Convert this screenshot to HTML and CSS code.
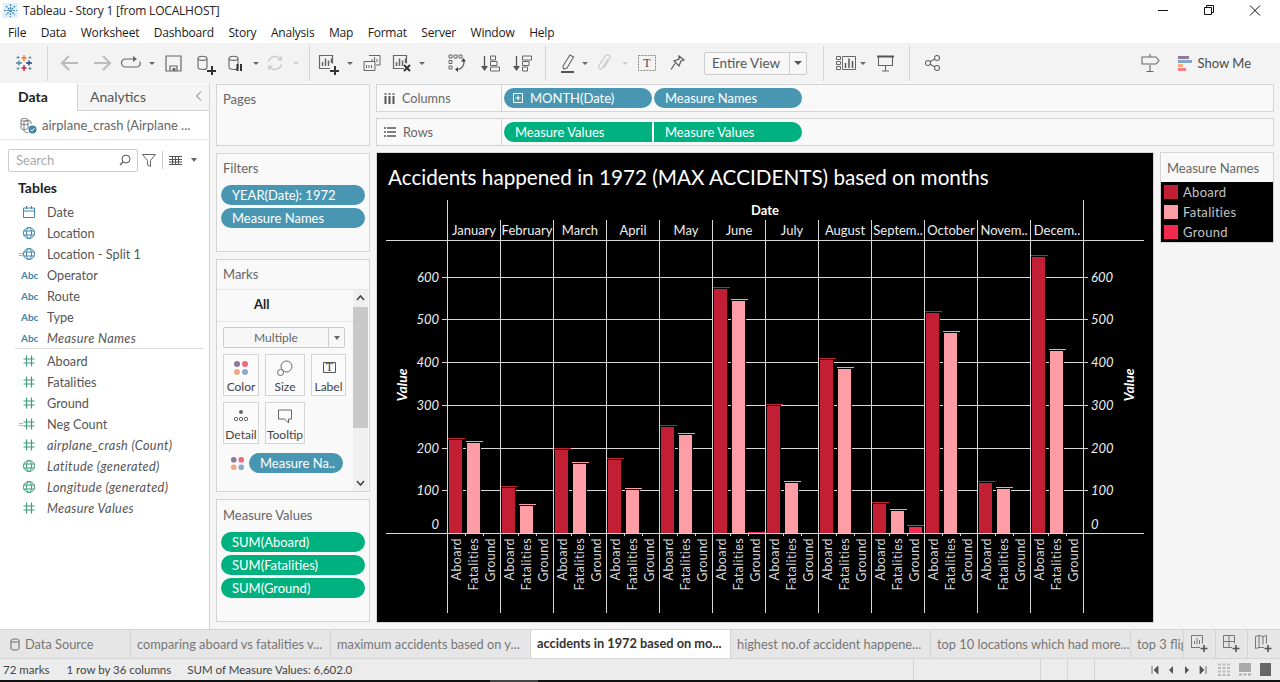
FILE: index.html
```html
<!DOCTYPE html>
<html lang="en">

<head>
    <meta charset="UTF-8">
    <meta name="viewport" content="width=device-width, initial-scale=1.0">
    <title>Tableau - Story 1 [from LOCALHOST]</title>
    <link rel="stylesheet" href="styles.css">
</head>

<body>
    <svg class="defs" width="0" height="0">
        <symbol id="i-date" viewBox="0 0 14 14"><path d="M1.5 3h11v9.5h-11zM1.5 6h11M4.500 1v3M9.500 1v3" fill="none" stroke="#3f86a8" /></symbol>
        <symbol id="i-globe" viewBox="0 0 14 14"><g fill="none" stroke="currentColor"><circle cx="7" cy="7" r="5.500" /><ellipse cx="7" cy="7" rx="2.500" ry="5.500" /><path d="M1.500 5h11M1.500 9h11" /></g></symbol>
        <symbol id="i-hash" viewBox="0 0 14 14"><path d="M4.500 1.500v11M9.500 1.500v11M1.500 5h11M1.500 9h11" fill="none" stroke="#3f9e7c" stroke-width="1.200" /></symbol>
        <symbol id="i-dots" viewBox="0 0 16 16"><circle cx="4" cy="4" r="3" fill="#8a7a9c" /><circle cx="12" cy="4" r="3" fill="#f0687a" /><circle cx="4" cy="12" r="3" fill="#f4a67f" /><circle cx="12" cy="12" r="3" fill="#8aa9cf" /></symbol>
        <symbol id="i-cyl" viewBox="0 0 18 18"><path d="M2 4.500c0-3 9-3 9 0v9c0 1.500-2 2-4 2s-5-.5-5-2zM2 4.500c0 2.500 9 2.500 9 0" fill="none" stroke="#666" stroke-width="1.100" /></symbol>
        <symbol id="i-sheet" viewBox="0 0 20 20"><path d="M12 15.500H1.500v-13h13v8" fill="none" stroke="#666" stroke-width="1.200" /><path d="M4.500 13V9M7.500 13V5.500M10.500 13V7.500M13.500 10V5.500" stroke="#666" stroke-width="1.500" /></symbol>
    </svg>

    <div class="app">
        <header class="title-bar">
            <svg class="app-icon" width="15" height="15" viewBox="0 0 15 15">
                <rect width="15" height="15" fill="#e3eff6" />
                <path d="M7.500 1v13M1 7.500h13M3 3l9 9M12 3l-9 9" stroke="#3d85b0" stroke-width="1.200" stroke-dasharray="2 1" />
            </svg>
            <span class="app-title">Tableau - Story 1 [from LOCALHOST]</span>
            <div class="win-buttons">
                <svg class="win-button" width="46" height="21" viewBox="0 0 46 21"><path d="M18 10.500h10" stroke="#111" /></svg>
                <svg class="win-button" width="46" height="21" viewBox="0 0 46 21"><path d="M18.500 7.500h7v7h-7zM20.500 7.500v-2h7v7h-2" fill="none" stroke="#111" /></svg>
                <svg class="win-button" width="46" height="21" viewBox="0 0 46 21"><path d="M18 5.500l10 10M28 5.500l-10 10" stroke="#111" /></svg>
            </div>
        </header>

        <nav class="menu-bar">
            <span>File</span><span>Data</span><span>Worksheet</span><span>Dashboard</span><span>Story</span><span>Analysis</span><span>Map</span><span>Format</span><span>Server</span><span>Window</span><span>Help</span>
        </nav>

        <div class="toolbar">
            <span class="tool w47">
                <svg width="18" height="18" viewBox="0 0 18 18">
                    <path d="M9 1v6M6.500 4h5" stroke="#e8762c" stroke-width="1.400" />
                    <path d="M9 11v6M6.500 14h5" stroke="#c72035" stroke-width="1.400" />
                    <path d="M1 9h6M4 6.500v5" stroke="#5b879b" stroke-width="1.400" />
                    <path d="M11 9h6M14 6.500v5" stroke="#1f457e" stroke-width="1.400" />
                    <path d="M3 2v3M1.500 3.500h3M15 13v3M13.500 14.500h3" stroke="#59879b" />
                    <path d="M15 2v3M13.500 3.500h3M3 13v3M1.500 14.500h3" stroke="#7099a6" />
                </svg>
            </span>
            <span class="tool-sep"></span>
            <span class="tool w6"></span>
            <span class="tool w32"><svg width="18" height="16" viewBox="0 0 18 16"><path d="M1 8h16M8 1L1 8l7 7" fill="none" stroke="#bbb" stroke-width="2" /></svg></span>
            <span class="tool w32"><svg width="18" height="16" viewBox="0 0 18 16"><path d="M17 8H1M10 1l7 7-7 7" fill="none" stroke="#bbb" stroke-width="2" /></svg></span>
            <span class="tool w26"><svg width="20" height="14" viewBox="0 0 20 14"><path d="M12 3H4.500a4 4 0 0 0 0 8h11a3.500 3.500 0 0 0 3-5.500" fill="none" stroke="#666" stroke-width="1.200" /><path d="M12 0l4 3-4 3z" fill="#666" /></svg></span>
            <span class="tool w16"><i class="caret"></i></span>
            <span class="tool w26"><svg width="17" height="17" viewBox="0 0 17 17"><path d="M1 1h15v15H1z" fill="none" stroke="#666" stroke-width="1.200" /><path d="M5 16v-5h7v5" fill="none" stroke="#666" stroke-width="1.200" /><path d="M7.500 13h3v3h-3z" fill="#666" /></svg></span>
            <span class="tool w38 cyl-tool"><svg width="18" height="18"><use href="#i-cyl" /></svg><b class="mini-plus"></b></span>
            <span class="tool w24">
                <svg width="18" height="18" viewBox="0 0 18 18"><use href="#i-cyl" width="18" height="18" /><path d="M10.500 10v7M14 10v7" stroke="#333" stroke-width="2" /></svg>
            </span>
            <span class="tool w16"><i class="caret"></i></span>
            <span class="tool w22"><svg width="18" height="18" viewBox="0 0 18 18"><path d="M2.500 7.500a7 7 0 0 1 12-2.500M15.500 10.500a7 7 0 0 1-12 2.500" fill="none" stroke="#ccc" stroke-width="1.600" /><path d="M16 1.500v5h-5zM2 16.500v-5h5z" fill="#ccc" /></svg></span>
            <span class="tool w20"><i class="caret caret-off"></i></span>
            <span class="tool w3"></span>
            <span class="tool-sep"></span>
            <span class="tool w36 cyl-tool"><svg width="20" height="20"><use href="#i-sheet" /></svg><b class="mini-plus"></b></span>
            <span class="tool w8"><i class="caret"></i></span>
            <span class="tool w36">
                <svg width="18" height="18" viewBox="0 0 18 18"><path d="M6 1.500h11V11h-4M1 7.500h11v9H1z" fill="#f3f3f3" stroke="#666" /><path d="M9 8V5M11.500 8V3M14 8V5M3.500 14v-3M6 14v-3M8.500 14v-3" stroke="#666" /></svg>
            </span>
            <span class="tool w24">
                <svg width="20" height="20" viewBox="0 0 20 20"><use href="#i-sheet" width="20" height="20" /><path d="M12 12l6 6M18 12l-6 6" stroke="#333" stroke-width="2" /></svg>
            </span>
            <span class="tool w16"><i class="caret"></i></span>
            <span class="tool w14"></span>
            <span class="tool w26">
                <svg width="18" height="18" viewBox="0 0 18 18"><path d="M1 1h3v3H1zM6 1h3v3H6zM11 1h3v3h-3zM1 6.500h3v3H1zM1 12h3v3H1z" fill="none" stroke="#666" /><path d="M15.500 6a7 7 0 0 1-6.500 9.500" fill="none" stroke="#666" stroke-width="1.200" /><path d="M15.500 4l2.500 3.500h-5zM7 15.500l3-2.500v5z" fill="#444" /></svg>
            </span>
            <span class="tool w40">
                <svg width="19" height="17" viewBox="0 0 19 17"><path d="M3.500 1v13" stroke="#555" stroke-width="1.300" /><path d="M0 11l3.500 5L7 11z" fill="#555" /><path d="M9.500 1h5v4h-5zM9.500 6.500h6.500v4H9.500zM9.500 12h9v4h-9z" fill="none" stroke="#666" /></svg>
            </span>
            <span class="tool w24">
                <svg width="19" height="17" viewBox="0 0 19 17"><path d="M3.500 1v13" stroke="#555" stroke-width="1.300" /><path d="M0 11l3.500 5L7 11z" fill="#555" /><path d="M9.500 1h9v4h-9zM9.500 6.500h6.500v4H9.500zM9.500 12h5v4h-5z" fill="none" stroke="#666" /></svg>
            </span>
            <span class="tool w11"></span>
            <span class="tool-sep"></span>
            <span class="tool w10"></span>
            <span class="tool w24">
                <svg width="14" height="20" viewBox="0 0 14 20"><path d="M2 13L9 2l3.500 2L6 15l-3.500 1z" fill="none" stroke="#666" stroke-width="1.100" /><path d="M0 19h13" stroke="#555" stroke-width="2" /></svg>
            </span>
            <span class="tool w10"><i class="caret"></i></span>
            <span class="tool w30">
                <svg width="14" height="18" viewBox="0 0 14 18"><path d="M10 5l-5.500 9a2.300 2.300 0 0 1-3.800-2.500L7.500 2a2.500 2.500 0 0 1 4.500 2L6 13.500" fill="none" stroke="#ccc" stroke-width="1.300" /></svg>
            </span>
            <span class="tool w10"><i class="caret caret-off"></i></span>
            <span class="tool w34">
                <svg width="18" height="16" viewBox="0 0 18 16"><path d="M.5.500h17v15H.5z" fill="none" stroke="#888" stroke-dasharray="2 1" /><text x="9" y="12" class="icon-t">T</text></svg>
            </span>
            <span class="tool w26">
                <svg width="15" height="16" viewBox="0 0 15 16"><path d="M9 1l5 4-3 1-2 5-5-5 5-2zM5 8.500L1 14.500" fill="none" stroke="#555" stroke-width="1.200" /></svg>
            </span>
            <span class="tool w14"></span>
            <div class="view-select"><span class="view-value">Entire View</span><span class="view-arrow"><i class="caret"></i></span></div>
            <span class="tool w16"></span>
            <span class="tool-sep"></span>
            <span class="tool w10"></span>
            <span class="tool w24">
                <svg width="20" height="14" viewBox="0 0 20 14"><path d="M.5.500h4v3h-4zM.5 5.500h4v3h-4zM.5 10.500h4v3h-4zM6.500.500h13v13h-13z" fill="none" stroke="#666" /><path d="M9.500 12V7M13 12V2.500M16.500 12V5" stroke="#555" stroke-width="1.500" /></svg>
            </span>
            <span class="tool w10"><i class="caret"></i></span>
            <span class="tool w34">
                <svg width="17" height="17" viewBox="0 0 17 17"><path d="M0 1.500h17" stroke="#555" stroke-width="2" /><path d="M1.500 2v8.500h14V2M8.500 10.500V16M5 16h7" fill="none" stroke="#666" stroke-width="1.100" /></svg>
            </span>
            <span class="tool w7"></span>
            <span class="tool-sep"></span>
            <span class="tool w44">
                <svg width="15" height="16" viewBox="0 0 15 16"><circle cx="3" cy="8" r="2.500" fill="none" stroke="#666" stroke-width="1.100" /><circle cx="12" cy="3" r="2.500" fill="none" stroke="#666" stroke-width="1.100" /><circle cx="12" cy="13" r="2.500" fill="none" stroke="#666" stroke-width="1.100" /><path d="M5 6.800l5-2.800M5 9.200l5 2.800" stroke="#666" stroke-width="1.100" /></svg>
            </span>
            <div class="show-me">
                <svg width="19" height="18" viewBox="0 0 19 18"><path d="M9 2.500V0M9 11v7M5.500 17.500h7M1 3h14l3 3.500L15 10H1z" fill="none" stroke="#666" stroke-width="1.100" /></svg>
                <svg class="show-bars" width="14" height="16" viewBox="0 0 14 16"><rect y="1" width="11" height="3" fill="#8d7b9f" /><rect y="5" width="14" height="3" fill="#81a5cb" /><rect y="9" width="5" height="3" fill="#f5ad7d" /><rect y="13" width="8" height="3" fill="#f57d87" /></svg>
                <span class="show-me-text">Show Me</span>
            </div>
        </div>

        <main class="workspace">
            <aside class="data-pane">
                <div class="pane-tabs">
                    <div class="pane-tab pane-tab-on">Data</div>
                    <div class="pane-tab">Analytics<svg class="pane-collapse" width="7" height="10" viewBox="0 0 7 10"><path d="M6 .5L1.500 5 6 9.500" fill="none" stroke="#666" /></svg></div>
                </div>
                <div class="source-row">
                    <svg width="17" height="17" viewBox="0 0 17 17"><path d="M1 3c0-2 7-2 7 0v8c0 1-2 1.500-3.500 1.500S1 12 1 11zM1 3c0 1.500 7 1.500 7 0M1 6.500c0 1.500 7 1.500 7 0" fill="none" stroke="#777" /><path d="M4 5c0-2 7-2 7 0v2M4 5v9c0 1 2 1.500 4 1.500" fill="none" stroke="#777" /><circle cx="12.500" cy="12.500" r="4" fill="#3f86a8" /><path d="M10.500 12.500l1.500 1.500 2.500-3" fill="none" stroke="#fff" /></svg>
                    <span class="source-name">airplane_crash (Airplane ...</span>
                </div>
                <div class="search-row">
                    <div class="search-box">
                        <span>Search</span>
                        <svg width="12" height="12" viewBox="0 0 12 12"><circle cx="7" cy="5" r="4" fill="none" stroke="#555" /><path d="M4 8l-3 3" stroke="#555" stroke-width="1.300" /></svg>
                    </div>
                    <svg class="funnel" width="14" height="13" viewBox="0 0 14 13"><path d="M.5.500h13L8.500 6.500v6l-3-1.500V6.500z" fill="none" stroke="#666" /></svg>
                    <span class="search-sep"></span>
                    <svg width="13" height="9" viewBox="0 0 13 9"><path d="M0 .5h13M0 3.500h13M0 6h13M0 8.500h13M3.500 0v9M6.500 0v9M9.500 0v9" stroke="#555" /></svg>
                    <i class="caret search-caret"></i>
                </div>
                <h3 class="tables-title">Tables</h3>
                <ul class="field-list">
                    <li><span class="field-icon"><svg width="14" height="14"><use href="#i-date" /></svg></span>Date</li>
                    <li><span class="field-icon icon-dim"><svg width="14" height="14"><use href="#i-globe" /></svg></span>Location</li>
                    <li><span class="field-icon icon-dim"><em class="calc">=</em><svg width="14" height="14"><use href="#i-globe" /></svg></span>Location - Split 1</li>
                    <li><span class="field-icon abc">Abc</span>Operator</li>
                    <li><span class="field-icon abc">Abc</span>Route</li>
                    <li><span class="field-icon abc">Abc</span>Type</li>
                    <li class="field-gen"><span class="field-icon abc">Abc</span>Measure Names</li>
                </ul>
                <div class="field-divider"></div>
                <ul class="field-list">
                    <li><span class="field-icon"><svg width="14" height="14"><use href="#i-hash" /></svg></span>Aboard</li>
                    <li><span class="field-icon"><svg width="14" height="14"><use href="#i-hash" /></svg></span>Fatalities</li>
                    <li><span class="field-icon"><svg width="14" height="14"><use href="#i-hash" /></svg></span>Ground</li>
                    <li><span class="field-icon icon-meas"><em class="calc">=</em><svg width="14" height="14"><use href="#i-hash" /></svg></span>Neg Count</li>
                    <li class="field-gen"><span class="field-icon"><svg width="14" height="14"><use href="#i-hash" /></svg></span>airplane_crash (Count)</li>
                    <li class="field-gen"><span class="field-icon icon-meas"><svg width="14" height="14"><use href="#i-globe" /></svg></span>Latitude (generated)</li>
                    <li class="field-gen"><span class="field-icon icon-meas"><svg width="14" height="14"><use href="#i-globe" /></svg></span>Longitude (generated)</li>
                    <li class="field-gen"><span class="field-icon"><svg width="14" height="14"><use href="#i-hash" /></svg></span>Measure Values</li>
                </ul>
            </aside>

            <section class="side-col">
                <div class="card card-pages"><div class="card-title">Pages</div></div>
                <div class="card card-filters">
                    <div class="card-title">Filters</div>
                    <div class="pill-stack">
                        <div class="pill pill-blue">YEAR(Date): 1972</div>
                        <div class="pill pill-blue">Measure Names</div>
                    </div>
                </div>
                <div class="card card-marks">
                    <div class="card-title">Marks</div>
                    <div class="marks-body">
                        <div class="marks-main">
                            <div class="marks-all">All</div>
                            <div class="marks-type"><span>Multiple</span><span class="marks-arrow"><i class="caret"></i></span></div>
                            <div class="marks-grid">
                                <div class="mark-btn"><svg width="16" height="16"><use href="#i-dots" /></svg><span>Color</span></div>
                                <div class="mark-btn"><svg width="16" height="16" viewBox="0 0 16 16"><circle cx="9.500" cy="6.500" r="5.500" fill="none" stroke="#666" /><circle cx="3.500" cy="12.500" r="3" fill="#f9f9f9" stroke="#666" /></svg><span>Size</span></div>
                                <div class="mark-btn"><svg width="16" height="16" viewBox="0 0 16 16"><path d="M2.500 2.500h12v10h-12z" fill="none" stroke="#555" /><text x="8.500" y="11" class="icon-t">T</text></svg><span>Label</span></div>
                                <div class="mark-btn"><svg width="16" height="16" viewBox="0 0 16 16"><circle cx="8" cy="4" r="2" fill="#666" /><circle cx="3" cy="11" r="1.700" fill="none" stroke="#666" /><circle cx="8" cy="11" r="1.700" fill="none" stroke="#666" /><circle cx="13" cy="11" r="1.700" fill="none" stroke="#666" /></svg><span>Detail</span></div>
                                <div class="mark-btn"><svg width="16" height="16" viewBox="0 0 16 16"><path d="M1.500 2h13v9h-3v4l-4-4h-6z" fill="none" stroke="#666" /></svg><span>Tooltip</span></div>
                            </div>
                            <div class="marks-pill-row">
                                <svg width="15" height="15"><use href="#i-dots" /></svg>
                                <div class="pill pill-blue pill-marks">Measure Na..</div>
                            </div>
                        </div>
                        <div class="scrollbar">
                            <svg width="15" height="17" viewBox="0 0 15 17"><path d="M4 10l3.500-4L11 10" fill="none" stroke="#444" stroke-width="1.500" /></svg>
                            <div class="scroll-track"><div class="scroll-thumb"></div></div>
                            <svg width="15" height="17" viewBox="0 0 15 17"><path d="M4 7l3.500 4L11 7" fill="none" stroke="#444" stroke-width="1.500" /></svg>
                        </div>
                    </div>
                </div>
                <div class="card card-values">
                    <div class="card-title">Measure Values</div>
                    <div class="pill-stack">
                        <div class="pill pill-green">SUM(Aboard)</div>
                        <div class="pill pill-green">SUM(Fatalities)</div>
                        <div class="pill pill-green">SUM(Ground)</div>
                    </div>
                </div>
            </section>

            <section class="view-col">
                <div class="shelf">
                    <div class="shelf-label">
                        <svg width="11" height="11" viewBox="0 0 11 11"><path d="M1.500 3v8M5.500 3v8M9.500 3v8" stroke="#555" stroke-width="2" /><path d="M.5 1h2M4.500 1h2M8.500 1h2" stroke="#555" stroke-width="1.500" /></svg>
                        Columns
                    </div>
                    <div class="shelf-pills">
                        <div class="pill pill-blue pill-shelf"><svg class="pill-plus" width="11" height="11" viewBox="0 0 11 11"><path d="M.5.500h9v9h-9zM5 2.500v5M2.500 5h5" fill="none" stroke="#fff" /></svg>MONTH(Date)</div>
                        <div class="pill pill-blue pill-shelf">Measure Names</div>
                    </div>
                </div>
                <div class="shelf">
                    <div class="shelf-label">
                        <svg width="12" height="10" viewBox="0 0 12 10"><path d="M3 1h9M3 5h9M3 9h9M0 1h2M0 5h2M0 9h2" stroke="#555" stroke-width="1.600" /></svg>
                        Rows
                    </div>
                    <div class="shelf-pills">
                        <div class="pill pill-green pill-shelf pill-left">Measure Values</div>
                        <div class="pill pill-green pill-shelf pill-right">Measure Values</div>
                    </div>
                </div>
                <div class="view-row">
                    <div class="viz">
                        <svg id="chart" width="776" height="469" viewBox="377 153 776 469"></svg>
                    </div>
                    <div class="legend">
                        <div class="legend-title">Measure Names</div>
                        <div class="legend-body">
                            <div class="legend-item"><span class="swatch swatch-aboard"></span>Aboard</div>
                            <div class="legend-item"><span class="swatch swatch-fatal"></span>Fatalities</div>
                            <div class="legend-item"><span class="swatch swatch-ground"></span>Ground</div>
                        </div>
                    </div>
                </div>
            </section>
        </main>

        <div class="tab-bar">
            <div class="tab-scroll">
                <div class="tab tab-source"><svg width="10" height="13" viewBox="0 0 10 13"><path d="M1 2.500c0-2 8-2 8 0v8c0 2-8 2-8 0zM1 3c0 1.500 8 1.500 8 0" fill="none" stroke="#666" /></svg>Data Source</div>
                <div class="tab">comparing aboard vs fatalities v...</div>
                <div class="tab">maximum accidents based on y...</div>
                <div class="tab tab-on">accidents in 1972 based on mo...</div>
                <div class="tab">highest no.of accident happene...</div>
                <div class="tab">top 10 locations which had more...</div>
                <div class="tab tab-last">top 3 flig</div>
            </div>
            <div class="tab-add"><svg width="17" height="18" viewBox="0 0 17 18"><path d="M9 12.500H.5v-12h11v8" fill="none" stroke="#777" /><path d="M3.500 9V6M6 9V3M8.500 9V5" stroke="#777" /><path d="M13 10v7M9.500 13.500h7" stroke="#555" stroke-width="1.600" /></svg></div>
            <div class="tab-add"><svg width="17" height="18" viewBox="0 0 17 18"><path d="M9 12.500H.5v-12h11v8M6 .5v12M.5 6.500h11" fill="none" stroke="#777" /><path d="M13 10v7M9.500 13.500h7" stroke="#555" stroke-width="1.600" /></svg></div>
            <div class="tab-add"><svg width="17" height="18" viewBox="0 0 17 18"><path d="M9 12.500H4l-3.500 1v-12l3.500-1 4 1 3.500-1v8M4 .5v12M8 1.500v8" fill="none" stroke="#777" /><path d="M13 10v7M9.500 13.500h7" stroke="#555" stroke-width="1.600" /></svg></div>
        </div>

        <footer class="status-bar">
            <span class="status-text first">72 marks</span>
            <span class="status-text">1 row by 36 columns</span>
            <span class="status-text">SUM of Measure Values: 6,602.0</span>
            <span class="status-cell cell-wide"></span>
            <span class="status-cell"></span>
            <span class="status-cell"></span>
            <div class="status-cell status-nav">
                <svg width="8" height="8" viewBox="0 0 8 8"><path d="M1 0v8M7 0v8L3 4z" fill="#555" stroke="#555" stroke-width=".8" /></svg>
                <svg width="8" height="8" viewBox="0 0 8 8"><path d="M6 0v8L2 4z" fill="#555" /></svg>
                <svg width="8" height="8" viewBox="0 0 8 8"><path d="M2 0v8l4-4z" fill="#555" /></svg>
                <svg width="8" height="8" viewBox="0 0 8 8"><path d="M7 0v8M1 0v8l4-4z" fill="#555" stroke="#555" stroke-width=".8" /></svg>
            </div>
            <div class="status-views">
                <svg width="12" height="13" viewBox="0 0 12 13"><path d="M0 1.500h12M0 5h12M0 8.500h12M0 12h12" stroke="#bbb" stroke-width="2" stroke-dasharray="3 1.500" /></svg>
                <svg width="12" height="13" viewBox="0 0 12 13"><rect width="12" height="9" fill="#aaa" /><path d="M0 11.500h12" stroke="#aaa" stroke-width="2" stroke-dasharray="3 1.500" /></svg>
                <svg width="11" height="13" viewBox="0 0 11 13"><rect width="11" height="13" fill="#666" /></svg>
            </div>
        </footer>
        <div class="taskbar-edge"><span class="edge-grey"></span></div>
    </div>

    <script src="chart.js"></script>
</body>

</html>
```
FILE: styles.css
```css
* {
    box-sizing: border-box;
}

body {
    margin: 0;
    font-family: "Lato", Arial, sans-serif;
    font-size: 13px;
    color: #555;
    background-color: #fff;
}

.defs {
    position: absolute;
}

svg {
    display: block;
    flex: none;
}

.app {
    width: 1280px;
    height: 682px;
    display: flex;
    flex-direction: column;
    overflow: hidden;
}

/* window chrome */
.title-bar {
    height: 21px;
    display: flex;
    align-items: center;
    padding-left: 3px;
    flex: none;
}

.app-title {
    margin-left: 5px;
    font-family: "Open Sans", sans-serif;
    font-size: 12px;
    letter-spacing: -.2px;
    color: #222;
}

.win-buttons {
    margin-left: auto;
    display: flex;
    padding-right: 2px;
}

.menu-bar {
    height: 22px;
    flex: none;
    display: flex;
    align-items: center;
    gap: 14.500px;
    padding-left: 8px;
    font-family: "Open Sans", sans-serif;
    font-size: 12px;
    letter-spacing: -.2px;
    color: #1a1a1a;
}

.toolbar {
    height: 40px;
    flex: none;
    display: flex;
    align-items: center;
    background-color: #f3f3f3;
}

.tool {
    height: 100%;
    display: flex;
    align-items: center;
    justify-content: center;
    flex: none;
    position: relative;
}

.w3 { width: 3px; }
.w6 { width: 6px; }
.w7 { width: 7px; }
.w8 { width: 8px; }
.w10 { width: 10px; }
.w11 { width: 11px; }
.w14 { width: 14px; }
.w16 { width: 16px; }
.w20 { width: 20px; }
.w22 { width: 22px; }
.w24 { width: 24px; }
.w26 { width: 26px; }
.w30 { width: 30px; }
.w32 { width: 32px; }
.w34 { width: 34px; }
.w36 { width: 36px; }
.w38 { width: 38px; }
.w40 { width: 40px; }
.w44 { width: 44px; }
.w47 { width: 47px; }

.tool-sep {
    width: 1px;
    height: 35px;
    flex: none;
    background-color: #d4d4d4;
}

.caret {
    display: block;
    width: 0;
    height: 0;
    border-left: 3px solid transparent;
    border-right: 3px solid transparent;
    border-top: 3px solid #666;
}

.caret-off {
    border-top-color: #ccc;
}

.mini-plus {
    position: absolute;
    left: 50%;
    top: 50%;
    margin-left: 2px;
    margin-top: 3px;
    width: 9px;
    height: 9px;
    background: linear-gradient(#333, #333) center / 9px 2px no-repeat, linear-gradient(#333, #333) center / 2px 9px no-repeat;
}

.icon-t {
    font-family: "Liberation Serif", serif;
    font-size: 12px;
    fill: #444;
    text-anchor: middle;
}

.view-select {
    width: 103px;
    height: 23px;
    flex: none;
    display: flex;
    align-items: stretch;
    border: 1px solid #ccc;
    border-radius: 2px;
    background-color: #f7f7f7;
}

.view-value {
    width: 84px;
    padding-left: 7px;
    line-height: 20px;
    font-size: 13.500px;
    color: #555;
}

.view-arrow {
    flex: 1;
    display: flex;
    align-items: center;
    justify-content: center;
    border-left: 1px solid #ccc;
}

.view-arrow .caret {
    border-width: 4px 4px 0;
    border-top-color: #555;
    border-left-color: transparent;
    border-right-color: transparent;
}

.show-me {
    margin-left: auto;
    display: flex;
    align-items: center;
    padding-right: 29px;
}

.show-bars {
    margin-left: 18px;
    margin-right: 6px;
}

.show-me-text {
    font-size: 13px;
    color: #4a4a4a;
}

/* main area */
.workspace {
    height: 546px;
    flex: none;
    display: flex;
    background-color: #f5f5f5;
}

.data-pane {
    width: 210px;
    flex: none;
    border-right: 1px solid #d4d4d4;
    background-color: #fff;
}

.pane-tabs {
    height: 27px;
    margin-top: 1px;
    display: flex;
}

.pane-tab {
    flex: 1;
    display: flex;
    align-items: center;
    padding: 0 0 2px 12px;
    font-size: 14px;
    background-color: #f5f5f5;
    border-left: 1px solid #d4d4d4;
    border-bottom: 1px solid #d4d4d4;
    position: relative;
}

.pane-tab-on {
    flex: none;
    width: 77px;
    padding-left: 18px;
    border: 0;
    font-weight: 700;
    color: #222;
    background-color: #fff;
}

.pane-collapse {
    margin-left: auto;
    margin-right: 7px;
}

.source-row {
    height: 29px;
    display: flex;
    align-items: center;
    padding-left: 20px;
    gap: 5px;
    border-bottom: 1px solid #e6e6e6;
    color: #666;
}

.search-row {
    display: flex;
    align-items: center;
    height: 24px;
    margin-top: 8px;
    padding-left: 8px;
}

.search-box {
    width: 130px;
    height: 23px;
    display: flex;
    align-items: center;
    justify-content: space-between;
    padding: 0 6px 0 7px;
    border: 1px solid #ccc;
    border-radius: 2px;
    color: #aaa;
}

.funnel {
    margin-left: 4px;
}

.search-sep {
    width: 1px;
    height: 18px;
    margin: 0 6px;
    background-color: #ccc;
}

.search-caret {
    margin-left: 9px;
    border-width: 4px 3.500px 0;
    border-left-color: transparent;
    border-right-color: transparent;
}

.tables-title {
    margin: 6px 0 3px 18px;
    font-size: 14px;
    line-height: 20px;
    color: #222;
}

.field-list {
    list-style: none;
    margin: 0;
    padding: 0;
}

.field-list li {
    height: 21px;
    display: flex;
    align-items: center;
    font-size: 12.700px;
    color: #555;
}

.field-list .field-gen {
    font-style: italic;
    letter-spacing: .35px;
}

.field-icon {
    width: 47px;
    flex: none;
    padding-left: 22px;
    display: flex;
    align-items: center;
    position: relative;
}

.icon-dim {
    color: #3f86a8;
}

.icon-meas {
    color: #3f9e7c;
}

.calc {
    position: absolute;
    left: 18px;
    font-size: 10px;
    font-style: normal;
}

.abc {
    padding-left: 21px;
    font-size: 10px;
    font-weight: 700;
    font-style: normal;
    letter-spacing: 0;
    color: #3f86a8;
}

.field-divider {
    height: 1px;
    margin: 0 6px 1px 15px;
    background-color: #ddd;
}

.side-col {
    width: 166px;
    flex: none;
    display: flex;
    flex-direction: column;
    padding: 1px 6px 0;
    gap: 7px;
}

.card {
    border: 1px solid #d4d4d4;
    background-color: #f9f9f9;
    flex: none;
}

.card-pages { height: 62px; }
.card-filters { height: 99px; }
.card-marks { height: 233px; }
.card-values { height: 123px; }

.card-title {
    height: 29px;
    padding: 6px 0 0 6px;
    color: #666;
}

.card-values .card-title {
    height: 30px;
    padding-top: 7px;
}

.pill {
    height: 20px;
    border-radius: 10px;
    padding-left: 11px;
    line-height: 20px;
    font-size: 13px;
    color: #fff;
    white-space: nowrap;
}

.pill-blue {
    background-color: #4996b2;
}

.pill-green {
    background-color: #00b180;
}

.pill-stack {
    display: flex;
    flex-direction: column;
    gap: 3px;
    margin: 2px 4px 0;
}

.marks-body {
    height: 202px;
    display: flex;
    border-top: 1px solid #e6e6e6;
}

.marks-main {
    width: 136px;
    flex: none;
}

.marks-all {
    height: 32px;
    line-height: 28px;
    padding-left: 37px;
    font-weight: 700;
    font-size: 13px;
    color: #222;
    border-bottom: 1px solid #e6e6e6;
}

.marks-type {
    width: 122px;
    height: 21px;
    margin: 5px 0 0 6px;
    display: flex;
    border: 1px solid #ccc;
    border-radius: 2px;
    background-color: #f7f7f7;
    font-size: 12px;
    color: #666;
}

.marks-type > span:first-child {
    width: 104px;
    text-align: center;
    line-height: 19px;
}

.marks-arrow {
    flex: 1;
    display: flex;
    align-items: center;
    justify-content: center;
    border-left: 1px solid #ccc;
}

.marks-arrow .caret {
    border-width: 4px 3.500px 0;
    border-left-color: transparent;
    border-right-color: transparent;
}

.marks-grid {
    display: grid;
    grid-template-columns: 36px 40px 35px;
    grid-auto-rows: 42px;
    gap: 6px;
    margin: 6px 0 0 6px;
}

.mark-btn {
    display: flex;
    flex-direction: column;
    align-items: center;
    padding-top: 5px;
    gap: 4px;
    border: 1px solid #d4d4d4;
    background-color: #fbfbfb;
    font-size: 12px;
    line-height: 14px;
    color: #444;
}

.marks-pill-row {
    display: flex;
    align-items: center;
    margin: 9px 0 0 13px;
    gap: 4px;
}

.pill-marks {
    width: 94px;
}

.scrollbar {
    width: 15px;
    display: flex;
    flex-direction: column;
    background-color: #f0f0f0;
}

.scroll-track {
    flex: 1;
}

.scroll-thumb {
    height: 121px;
    background-color: #c8c8c8;
}

.view-col {
    flex: 1;
    padding: 1px 6px 0 0;
    display: flex;
    flex-direction: column;
    gap: 6px;
}

.shelf {
    height: 28px;
    flex: none;
    display: flex;
    border: 1px solid #d4d4d4;
    background-color: #f9f9f9;
}

.shelf-label {
    width: 125px;
    display: flex;
    align-items: center;
    gap: 7px;
    padding-left: 7px;
    border-right: 1px solid #d4d4d4;
    font-size: 12.700px;
    color: #666;
}

.shelf-pills {
    display: flex;
    align-items: center;
    gap: 2px;
    padding-left: 2px;
}

.pill-shelf {
    width: 148px;
    display: flex;
    align-items: center;
}

.pill-left {
    border-radius: 10px 0 0 10px;
}

.pill-right {
    border-radius: 0 10px 10px 0;
}

.pill-plus {
    margin-right: 6px;
    margin-left: -2px;
}

.view-row {
    display: flex;
    gap: 6px;
    align-items: flex-start;
}

.viz {
    width: 778px;
    height: 471px;
    flex: none;
    border: 1px solid #d4d4d4;
    background-color: #000;
}

.legend {
    width: 114px;
    flex: none;
    border: 1px solid #d4d4d4;
    background-color: #f9f9f9;
}

.legend-title {
    height: 29px;
    padding: 7px 0 0 6px;
    color: #666;
}

.legend-body {
    height: 60px;
    background-color: #000;
}

.legend-item {
    height: 20px;
    display: flex;
    align-items: center;
    gap: 5px;
    padding-left: 3px;
    letter-spacing: .3px;
    color: #c4c4c4;
}

.swatch {
    width: 14px;
    height: 14px;
    flex: none;
}

.swatch-aboard { background-color: #c21f35; }
.swatch-fatal { background-color: #ff9da7; }
.swatch-ground { background-color: #f5294f; }

/* tabs and status */
.tab-bar {
    height: 30px;
    flex: none;
    display: flex;
    background-color: #e6e6e6;
    border-top: 1px solid #d4d4d4;
    border-bottom: 1px solid #d4d4d4;
}

.tab-scroll {
    width: 1183px;
    flex: none;
    display: flex;
    overflow: hidden;
}

.tab {
    width: 200px;
    flex: none;
    padding-left: 6px;
    line-height: 28px;
    font-size: 12.800px;
    border-right: 1px solid #d4d4d4;
    color: #777;
    white-space: nowrap;
}

.tab-last {
    width: 52px;
    border-right: 0;
}

.tab-source {
    width: 131px;
    display: flex;
    align-items: center;
    gap: 5px;
    padding-left: 10px;
}

.tab-on {
    background-color: #fff;
    color: #333;
    font-weight: 700;
    line-height: 26px;
}

.tab-add {
    width: 32px;
    flex: none;
    display: flex;
    align-items: center;
    justify-content: center;
    border-left: 1px solid #d4d4d4;
}

.status-bar {
    height: 21px;
    flex: none;
    display: flex;
    align-items: stretch;
    background-color: #ececec;
    font-size: 11.500px;
    line-height: 21px;
    color: #444;
}

.status-text {
    margin-left: 16px;
    white-space: nowrap;
}

.status-text.first {
    margin-left: 3px;
    margin-right: 1px;
}

.status-cell {
    width: 27px;
    border-left: 1px solid #d4d4d4;
}

.cell-wide {
    width: 127px;
    margin-left: auto;
}

.status-nav {
    width: 118px;
    display: flex;
    align-items: center;
    gap: 8px;
    padding-left: 56px;
}

.status-views {
    width: 68px;
    display: flex;
    align-items: center;
    gap: 9px;
    padding-left: 6px;
}

.taskbar-edge {
    height: 2px;
    flex: none;
    background-color: #111;
}

.edge-grey {
    display: block;
    width: 48px;
    height: 2px;
    margin-left: 490px;
    background-color: #444;
}
```
FILE: chart.js
```js
var NS = 'http://www.w3.org/2000/svg';
var chart = document.getElementById('chart');

var GRID = '#d8d8d8';
var COLORS = ['#c21f35', '#ff9da7', '#f5294f'];
var NAMES = ['Aboard', 'Fatalities', 'Ground'];
var MONTHS = ['January', 'February', 'March', 'April', 'May', 'June', 'July', 'August', 'Septem..', 'October', 'Novem..', 'Decem..'];

// pixel y of the top of each bar, null where there is no bar to draw
var TOPS = [
    [440, 443, null], [488, 506, null], [450, 464, null], [460, 490, null],
    [427, 435, null], [289, 301, 534], [406, 483, null], [360, 369, null],
    [504, 511, 527], [313, 333, null], [483, 489, null], [257, 351, null]
];

var LEFT = 447;
var CELL = 53;
var ZERO = 533;

function add(tag, attrs, text) {
    var el = document.createElementNS(NS, tag);
    for (var key in attrs) {
        el.setAttribute(key, attrs[key]);
    }
    if (text) {
        el.textContent = text;
    }
    chart.appendChild(el);
    return el;
}

function box(x, y, w, h, fill) {
    add('rect', { x: x, y: y, width: w, height: h, fill: fill });
}

function label(text, x, y, opts) {
    var attrs = {
        x: x,
        y: y,
        fill: opts.fill || '#eee',
        'font-size': opts.size || 13,
        'font-family': 'Lato, sans-serif',
        'text-anchor': opts.anchor || 'middle'
    };
    if (opts.spacing) attrs['letter-spacing'] = opts.spacing;
    if (opts.italic) attrs['font-style'] = 'italic';
    if (opts.bold) attrs['font-weight'] = 700;
    if (opts.rotate) attrs.transform = 'rotate(-90 ' + x + ' ' + y + ')';
    add('text', attrs, text);
}

label('Accidents happened in 1972 (MAX ACCIDENTS) based on months', 388, 185, { fill: '#fff', size: 20.7, anchor: 'start' });
label('Date', 765, 215, { fill: '#fff', size: 13, bold: true });
label('Value', 407, 385, { fill: '#fff', size: 14, bold: true, italic: true, rotate: true });
label('Value', 1134, 385, { fill: '#fff', size: 14, bold: true, italic: true, rotate: true });

// horizontal rules
box(386, 240, 758, 1, GRID);
box(386, ZERO, 758, 1, GRID);
[600, 500, 400, 300, 200, 100].forEach(function (value, i) {
    var y = [277, 319, 362, 405, 448, 490][i];
    box(442, y, 646, 1, GRID);
    label(String(value), 439, y + 5, { anchor: 'end', italic: true });
    label(String(value), 1091, y + 5, { anchor: 'start', italic: true });
});
label('0', 439, 529, { anchor: 'end', italic: true });
label('0', 1091, 529, { anchor: 'start', italic: true });

// columns, ticks and bars
for (var m = 0; m <= 12; m++) {
    var lineTop = (m === 0 || m === 12) ? 200 : 220;
    box(LEFT + m * CELL, lineTop, 1, 613 - lineTop, GRID);
}

MONTHS.forEach(function (name, m) {
    var x = LEFT + m * CELL;
    label(name, x + 27, 235, {});
    box(x + 18, ZERO, 1, 3, GRID);
    box(x + 36, ZERO, 1, 3, GRID);

    NAMES.forEach(function (measure, k) {
        var top = TOPS[m][k];
        label(measure, x + 14 + k * 17, 538, { fill: '#d8d8d8', size: 12.5, spacing: 0.4, anchor: 'end', rotate: true });
        if (top === null) return;
        var barX = x + 2 + k * 18;
        box(barX - 1, top - 1, 15, ZERO - top + 1, '#000');
        box(barX, top, 13, ZERO - top, COLORS[k]);
        box(x + 1 + k * 18 - (k === 2 ? 1 : 0), top - 2, 17, 1, COLORS[k]);
    });
});
```
